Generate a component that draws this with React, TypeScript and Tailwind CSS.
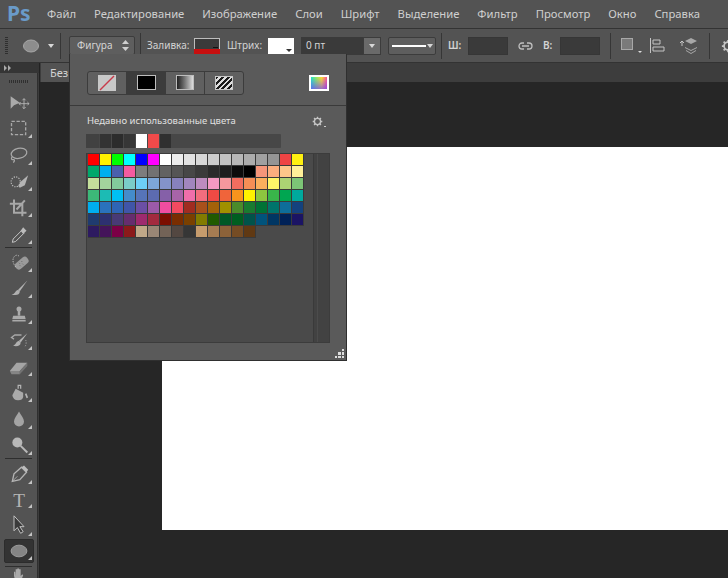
import React from "react";

const rows: string[][] = [
  ["#ff0000","#fff200","#00ff00","#00ffff","#0000ff","#ff00ff","#ffffff","#ebebeb","#e1e1e1","#d7d7d7","#cccccc","#c2c2c2","#b7b7b7","#acacac","#a0a0a0","#959595","#ee4444","#fff010"],
  ["#00a86b","#00aeef","#4a5fae","#f45ba0","#7d7d7d","#727272","#626262","#555555","#474747","#3a3a3a","#2b2b2b","#1e1e1e","#0c0c0c","#000000","#f6967a","#fcae7e","#fdc68a","#fff099"],
  ["#c4df9b","#a3d39c","#82ca9c","#7accc8","#6dcff6","#7da7d9","#8393ca","#8781bd","#a186be","#bd8cbf","#f49ac2","#f5989d","#f26d5f","#f68e56","#fbaf5d","#fff568","#acd373","#7cc576"],
  ["#3cb878","#1cbbb4","#00bff3","#448ccb","#5674b9","#5c6bb0","#8560a8","#a864a8","#f06eaa","#f26d7d","#f04a44","#f0643a","#f7941d","#fff200","#8dc63f","#39b54a","#00a651","#00a99d"],
  ["#00aeef","#2a72bc","#2e65b5","#4055a8","#6b4fa5","#9b5aa8","#f04da0","#f24a60","#a02c20","#a8501c","#a36209","#a09000","#4b8b2a","#197b30","#007236","#00746b","#0e6d9a","#14427e"],
  ["#1f3b6f","#2d3070","#483a75","#662d6e","#9e2a6e","#a32a3f","#7b0e00","#7a2d00","#7a4000","#827b00","#215a00","#005826","#005e20","#00534a","#00537c","#003663","#002157","#1b1464"],
  ["#2d1a60","#44145a","#7b0046","#8b1a1a","#c0a888","#998675","#736357","#534741","#363636","#c69c6d","#a67c52","#8c6239","#754c24","#603913"],
];
const recent = ["#414141","#333333","#2c2c2c","#363636","#ffffff","#f04a4a","#303030"];
const menu = ["Файл","Редактирование","Изображение","Слои","Шрифт","Выделение","Фильтр","Просмотр","Окно","Справка"];

const G = "#a8a8a8";
type T = { h: number; icon: React.ReactNode; sep?: boolean; active?: boolean; gap?: number; noCorner?: boolean };
const tools: T[] = [
  { h: 26, noCorner: true, icon: <g><path d="M4 5v15l4-4 7-3z" fill="#aaaaaa" /><path d="M20 8v12M14 14h12M20 8l-2 2M20 8l2 2M20 20l-2-2M20 20l2-2M14 14l2-2M14 14l2 2M26 14l-2-2M26 14l-2 2" stroke="#bbbbbb" fill="none" strokeWidth="1" /></g> },
  { h: 26, icon: <rect x="5" y="4" width="17" height="16" fill="none" stroke={G} strokeWidth="1.6" strokeDasharray="4 2" /> },
  { h: 27, icon: <g fill="none" stroke={G} strokeWidth="1.5"><ellipse cx="14" cy="10" rx="9.5" ry="6" transform="rotate(-12 14 10)" /><path d="M6 14c-2 2-1 4 1 3.5s2 2 0 3.5" /></g> },
  { h: 26, icon: <g><ellipse cx="10" cy="13" rx="5.5" ry="6" fill="none" stroke="#c0c0c0" strokeDasharray="1.5 1.5" strokeWidth="1.3" /><path d="M25 5l-9 8-3 5 2 2 6-3z" fill="#b4b4b4" /></g> },
  { h: 26, icon: <path d="M8 3v16h15M3 8h15v15M21 4L11 15" fill="none" stroke={G} strokeWidth="2.4" /> },
  { h: 27, icon: <g><path d="M6 22l1-4 10-10 3 3-10 10z" fill="none" stroke="#c4c4c4" strokeWidth="1.2" /><path d="M16 8l3-4 4 4-4 4z" fill="#bbbbbb" /></g>, sep: true },
  { h: 27, icon: <g><rect x="8" y="9" width="18" height="9" rx="4" transform="rotate(-40 17 13)" fill="#9a9a9a" /><path d="M14 5a5 8 0 0 0-6 1c-3 4 0 10 3 13" fill="none" stroke="#c0c0c0" strokeDasharray="1.5 1.5" strokeWidth="1.2" /><path d="M14 13l1 1M17 11l1 1M15 16l1 1M18 14l1 1" stroke="#666" strokeWidth="1.2" /></g> },
  { h: 26, icon: <g><path d="M24 3L13 14l2 2z" fill="#b4b4b4" /><path d="M13 14c-4 1-3 5-8 6 5 1 10 1 10-4z" fill="#b0b0b0" /></g> },
  { h: 26, icon: <g fill="#aaaaaa"><circle cx="14" cy="6" r="3" /><rect x="12.5" y="8" width="3" height="6" /><path d="M7 14h14l1 4H6z" /><rect x="6" y="19" width="16" height="2" /></g> },
  { h: 26, icon: <g><path d="M24 4L14 13l2 2z" fill="#b4b4b4" /><path d="M14 13c-4 1-3 4-7 6 5 1 9 0 9-4z" fill="#b0b0b0" /><path d="M17 6H9l-4 3 3 2" fill="none" stroke="#a8a8a8" strokeWidth="1.6" /><path d="M22 12a4 6 0 0 1-1 8" fill="none" stroke="#b0b0b0" strokeDasharray="1.5 1.5" /></g> },
  { h: 26, icon: <g><path d="M11 8h13l-9 10H3z" fill="#a4a4a4" /><path d="M3 18h12v4H5z" fill="#858585" /><path d="M15 18l9-10v4l-9 10z" fill="#737373" /></g> },
  { h: 26, icon: <g><path d="M10 8l9 5v5a6 5 0 0 1-6 4 7 7 0 0 1-7-6z" fill="#aaaaaa" /><path d="M13 8V4h3v4" fill="none" stroke="#b4b4b4" strokeWidth="1.5" /><path d="M22 14l2 5" stroke="#b4b4b4" strokeWidth="2" /></g> },
  { h: 27, icon: <path d="M14 3c2 4 6 8 6 12a6 6 0 0 1-12 0c0-4 4-8 6-12z" fill="#a4a4a4" /> },
  { h: 26, icon: <g><circle cx="12" cy="9" r="6" fill="#b8b8b8" /><path d="M16 13l8 8" stroke="#b8b8b8" strokeWidth="2.4" /></g>, sep: true },
  { h: 28, icon: <g><path d="M6 22l2-9 9-8 6 6-8 9z" fill="none" stroke="#b4b4b4" strokeWidth="1.6" /><path d="M17 5l3-2 5 5-2 3z" fill="#bcbcbc" /><path d="M6 22l6-6" stroke="#b4b4b4" /></g> },
  { h: 24, icon: <text x="14" y="21" textAnchor="middle" fontSize="23" fontFamily="'Liberation Serif', serif" fill="#b4b4b4">T</text> },
  { h: 28, icon: <g><path d="M8 1v18l4-4 4 7 3-2-4-6h5z" fill="#3a3a3a" stroke="#c0c0c0" strokeWidth="1.2" /></g> },
  { h: 24, active: true, gap: 3, icon: <ellipse cx="14" cy="12" rx="9.5" ry="7" fill="#858585" stroke="#a8a8a8" />, sep: true },
  { h: 18, noCorner: true, icon: <path d="M8 12V7l1.5 0 .5 5V4h2v7V3h2v8V4h2v8l2-2 1 1-3 8H10z" fill="#aaaaaa" /> },
];

function Corner() {
  return <span className="absolute right-[5px] bottom-[3px] w-0 h-0 border-l-[4px] border-l-transparent border-b-[4px] border-b-[#c4c4c4]" />;
}

function Tool({ t }: { t: T }) {
  return (
    <>
      <div style={{ height: t.h, marginBottom: t.gap ?? 0 }} className="relative flex items-center justify-center shrink-0">
        {t.active && <div className="absolute left-[4px] right-[3px] top-[0px] bottom-[0px] bg-[#333333] border border-[#2c2c2c] rounded-[2px]" />}
        <svg width="24" height="20" viewBox="0 0 28 24" className="relative">{t.icon}</svg>
        {!t.noCorner && <Corner />}
      </div>
      {t.sep && <div className="h-px mx-[5px] bg-[#2e2e2e] shrink-0" />}
    </>
  );
}

function Sep() {
  return <div className="w-px h-[26px] bg-[#363636] shrink-0" />;
}

function Caret() {
  return <span className="w-0 h-0 shrink-0 border-l-[3px] border-r-[3px] border-t-[4px] border-l-transparent border-r-transparent border-t-[#d8d8d8]" />;
}

function Gear({ size = 14 }: { size?: number }) {
  return (
    <svg width={size} height={size} viewBox="0 0 16 16">
      <circle cx="8" cy="8" r="4.5" fill="none" stroke="#c4c4c4" strokeWidth="2" />
      <path d="M8 1v3M8 12v3M1 8h3M12 8h3M3 3l2 2M11 11l2 2M13 3l-2 2M5 11l-2 2" stroke="#c4c4c4" strokeWidth="2" />
    </svg>
  );
}

export default function App() {
  return (
    <div className="relative w-[728px] h-[578px] overflow-hidden bg-[#262626] text-[#d4d4d4] font-['Noto_Sans','Open_Sans',sans-serif]">
      {/* menu */}
      <div className="h-[28px] bg-[#535353] flex items-center">
        <div className="w-[47px] shrink-0 pl-[7px] text-[21px] font-bold text-[#6a9bc9] leading-none -mt-[2px]">Ps</div>
        <div className="flex gap-[18px] text-[11.25px] text-[#cfcfcf] whitespace-nowrap">
          {menu.map((m) => <span key={m}>{m}</span>)}
        </div>
      </div>
      {/* options */}
      <div className="h-[35px] bg-[#535353] border-y border-[#333333] flex items-center text-[10px] text-[#d4d4d4]">
        <div className="ml-[5px] w-[3px] h-[18px] bg-[repeating-linear-gradient(#2f2f2f_0_1px,transparent_1px_2px)] shrink-0" />
        <svg width="16" height="14" viewBox="0 0 16 14" className="ml-[15px] shrink-0"><ellipse cx="8" cy="7" rx="7.5" ry="6" fill="#8d8d8d" stroke="#a8a8a8" /></svg>
        <div className="ml-[9px] flex items-center"><Caret /></div>
        <div className="ml-[6px]"><Sep /></div>
        <div className="ml-[8px] w-[66px] h-[19px] rounded-[2px] bg-[#5e5e5e] border border-[#3c3c3c] flex items-center justify-between pl-[7px] pr-[5px] shrink-0">
          <span>Фигура</span>
          <svg width="7" height="11" viewBox="0 0 7 11"><path d="M3.5 0L7 4H0zM3.5 11L0 7h7z" fill="#d0d0d0" /></svg>
        </div>
        <div className="ml-[5px]"><Sep /></div>
        <span className="ml-[6px] w-[47px] shrink-0">Заливка:</span>
        <div className="relative w-[26px] h-[16px] bg-[#3a3a3a] border border-[#bdbdbd] shrink-0">
          <div className="absolute -left-px -right-px -bottom-px h-[5px] bg-[#c80f0f]" />
          <span className="absolute right-[1px] bottom-[5px] w-[5px] h-[1px] bg-[#111111]" />
        </div>
        <span className="ml-[7px] w-[41px] shrink-0">Штрих:</span>
        <div className="relative w-[26px] h-[16px] bg-white shrink-0">
          <span className="absolute right-[2px] bottom-[2px] w-0 h-0 border-l-[3px] border-r-[3px] border-t-[3px] border-l-transparent border-r-transparent border-t-[#333333]" />
        </div>
        <div className="ml-[7px] w-[62px] h-[18px] bg-[#3a3a3a] pl-[5px] flex items-center shrink-0">0 пт</div>
        <div className="w-[18px] h-[18px] bg-[#6a6a6a] border border-[#3c3c3c] flex items-center justify-center shrink-0"><Caret /></div>
        <div className="ml-[7px] w-[48px] h-[18px] bg-[#5e5e5e] border border-[#3c3c3c] rounded-[2px] flex items-center pl-[3px] gap-[1px] shrink-0">
          <div className="w-[34px] h-[2px] bg-white" />
          <Caret />
        </div>
        <div className="ml-[5px]"><Sep /></div>
        <span className="ml-[6px] w-[20px] font-semibold shrink-0">Ш:</span>
        <div className="w-[40px] h-[18px] bg-[#3a3a3a] border border-[#363636] shrink-0" />
        <svg width="15" height="8" viewBox="0 0 15 8" className="ml-[10px] shrink-0"><path d="M6 1H4a3 3 0 0 0 0 6h2M9 1h2a3 3 0 0 1 0 6H9M4 4h7" fill="none" stroke="#c0c0c0" strokeWidth="1.3" /></svg>
        <span className="ml-[10px] w-[17px] font-semibold shrink-0">В:</span>
        <div className="w-[40px] h-[18px] bg-[#3a3a3a] border border-[#363636] shrink-0" />
        <div className="ml-[10px]"><Sep /></div>
        <div className="ml-[10px] w-[12px] h-[12px] bg-[#7a7a7a] border border-[#a8a8a8] shrink-0 -mt-[4px]" />
        <span className="ml-[5px] mt-[12px] w-0 h-0 border-l-[2px] border-r-[2px] border-t-[2px] border-l-transparent border-r-transparent border-t-[#dddddd] shrink-0" />
        <svg width="16" height="16" viewBox="0 0 16 16" className="ml-[8px] shrink-0"><path d="M.5 0v15M3 2h7v4H3zM3 9h11v4H3z" fill="none" stroke="#c4c4c4" /></svg>
        <svg width="20" height="18" viewBox="0 0 20 18" className="ml-[13px] shrink-0"><path d="M3 9V4M1 6l2-2 2 2" fill="none" stroke="#c4c4c4" /><path d="M12 1l6 3-6 3-6-3zM6 7l6 3 6-3-6 3zM6 10l6 3 6-3v1l-6 3-6-3zM7 13l5 3 5-3v1l-5 3-5-3z" fill="#a8a8a8" /></svg>
        <div className="ml-[10px]"><Sep /></div>
        <div className="ml-[11px] shrink-0"><Gear size={14} /></div>
      </div>
      {/* body */}
      <div className="flex h-[515px]">
        {/* toolbar */}
        <div className="w-[40px] shrink-0 flex flex-col bg-[#3c3c3c] border-r border-[#222222] h-full overflow-hidden">
          <div className="h-[10px] bg-[#353535] flex items-center pl-[4px] shrink-0">
            <svg width="8" height="6" viewBox="0 0 8 6"><path d="M0 0l3 3-3 3zM4 0l3 3-3 3z" fill="#aaaaaa" /></svg>
          </div>
          <div className="w-[38px] bg-[#535353] flex-1 border-r border-[#2f2f2f]">
            <div className="h-[16px] flex items-center justify-center">
              <div className="w-[19px] h-[3px] bg-[repeating-linear-gradient(90deg,#2f2f2f_0_1px,transparent_1px_2px)]" />
            </div>
            {tools.map((t, i) => <Tool key={i} t={t} />)}
          </div>
        </div>
        {/* work area */}
        <div className="flex-1 flex flex-col">
          <div className="h-[19px] bg-[#3d3d3d] flex shrink-0">
            <div className="ml-[1px] w-[80px] h-full bg-[#535353] pl-[9px] text-[11px] leading-[19px] text-[#d4d4d4]">Без</div>
          </div>
          <div className="flex-1 pl-[122px] pt-[65px]">
            <div className="w-[566px] h-[383px] bg-white" />
          </div>
        </div>
      </div>
      {/* popup */}
      <div className="absolute left-[69px] top-[54px] w-[278px] h-[307px] bg-[#5a5a5a] border-x border-b border-[#2f2f2f] flex flex-col">
        <div className="h-[52px] flex items-center justify-between pl-[17px] pr-[17px] pt-[6px] border-b border-[#3a3a3a] shrink-0">
          <div className="flex h-[24px] w-[157px] rounded-[3px] border border-[#3c3c3c] bg-[#606060]">
            <div className="w-[39px] flex items-center justify-center border-r border-[#3c3c3c]">
              <svg width="18" height="16" viewBox="0 0 18 16"><rect width="18" height="16" fill="#c8c8c8" /><path d="M2 15L16 1" stroke="#c83a4a" strokeWidth="1.5" /></svg>
            </div>
            <div className="w-[39px] flex items-center justify-center bg-[#3c3c3c]">
              <div className="w-[19px] h-[15px] bg-black border border-[#bdbdbd]" />
            </div>
            <div className="w-[39px] flex items-center justify-center border-r border-[#3c3c3c]">
              <div className="w-[18px] h-[15px] border border-[#bdbdbd] bg-gradient-to-r from-[#222222] to-[#dddddd]" />
            </div>
            <div className="flex-1 flex items-center justify-center">
              <div className="w-[18px] h-[14px] border border-[#c8c8c8] bg-[repeating-linear-gradient(135deg,#1a1a1a_0_2px,#dddddd_2px_4px)]" />
            </div>
          </div>
          <div className="relative w-[20px] h-[16px] border-2 border-white bg-[linear-gradient(90deg,#20e8c8,#90f060,#ffe030,#ff5090)] overflow-hidden">
            <div className="absolute inset-0 bg-gradient-to-b from-transparent to-[#7040ff]/70" />
          </div>
        </div>
        <div className="pl-[17px] pr-[17px] pt-[8px] flex-1 flex flex-col">
          <div className="flex items-center justify-between h-[15px] pr-[3px] text-[9.5px] text-[#e0e0e0] shrink-0">
            <span>Недавно использованные цвета</span>
            <span className="flex items-end gap-[1px]"><Gear size={11} /><span className="w-[2px] h-[1px] bg-[#cccccc]" /></span>
          </div>
          <div className="mt-[5px] h-[14px] w-[195px] bg-[#474747] flex rounded-[1px] -ml-[1px] shrink-0">
            {recent.map((c, i) => <div key={i} style={{ backgroundColor: c, width: i === 0 ? 14 : 12 }} className="h-[14px] border-r border-[#474747]" />)}
          </div>
          <div className="mt-[5px] w-[244px] h-[190px] bg-[#4a4a4a] border border-[#3c3c3c] flex -ml-[1px] shrink-0">
            <div className="flex-1 pl-[1px]">
              {rows.map((r, i) => (
                <div key={i} className="flex h-[12px]">
                  {r.map((c, j) => <div key={j} style={{ backgroundColor: c }} className="w-[12px] h-[12px] border-r border-b border-[#3a3a3a]" />)}
                </div>
              ))}
            </div>
            <div className="w-[16px] border-l border-[#3a3a3a] bg-[#424242] pl-[3px]">
              <div className="h-full border-l border-[#4c4c4c]" />
            </div>
          </div>
        </div>
        <div className="absolute right-[2px] bottom-[2px] w-[9px] h-[9px] grid grid-cols-3 gap-[1px]">
          {[0,0,1,0,1,1,1,1,1].map((v, i) => <span key={i} className={v ? "bg-[#dddddd]" : ""} />)}
        </div>
      </div>
    </div>
  );
}
